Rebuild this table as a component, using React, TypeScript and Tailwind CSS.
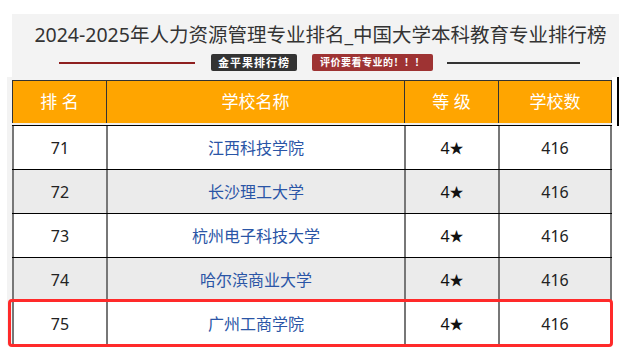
import React from "react";

const rows = [
  { rank: 71, name: "江西科技学院", count: 416 },
  { rank: 72, name: "长沙理工大学", count: 416 },
  { rank: 73, name: "杭州电子科技大学", count: 416 },
  { rank: 74, name: "哈尔滨商业大学", count: 416 },
  { rank: 75, name: "广州工商学院", count: 416 },
];

const cols = "grid grid-cols-[94px_298px_94px_114px]";

function Row({
  rank,
  name,
  count,
  shaded,
  marked,
}: {
  rank: number;
  name: string;
  count: number;
  shaded: boolean;
  marked: boolean;
}) {
  return (
    <div
      className={`${cols} relative h-[44px] border-t border-black text-[16px] ${
        shaded ? "bg-[#ebebeb]" : "bg-white"
      }`}
    >
      <div className="flex items-center justify-center border-l-2 border-[#777] text-[#222]">
        {rank}
      </div>
      <div className="flex items-center justify-center border-l-2 border-[#777] text-[#2a55a6]">
        {name}
      </div>
      <div className="flex items-center justify-center border-l-2 border-[#777] text-[#111]">
        4<span className="text-[14px]">★</span>
      </div>
      <div className="flex items-center justify-center border-x-2 border-[#777] text-[#222]">
        {count}
      </div>
      {marked ? (
        <div className="absolute -left-[4px] -right-[1px] -top-[3px] -bottom-[2px] rounded-[4px] border-[3px] border-[#ff2a2a]" />
      ) : null}
    </div>
  );
}

export default function App() {
  return (
    <div className="w-[619px] h-[364px] overflow-hidden bg-white font-['Noto_Sans','Noto_Sans_CJK_SC',sans-serif]">
      <div className="h-[14px]" />

      <div className="ml-[12px] h-[63px] bg-[#f3f3f3]">
        <h1 className="pt-[9px] pl-[10px] text-center text-[19.5px] leading-[24px] text-[#333]">
          2024-2025年人力资源管理专业排名_中国大学本科教育专业排行榜
        </h1>
        <div className="mt-[7px] flex items-center pl-[47px]">
          <div className="w-[136px] h-[2px] bg-[#8e1f1f]" />
          <div className="ml-[16px] w-[86px] h-[17px] rounded-[2px] bg-[#333] text-white text-[11px] font-bold leading-[17px] text-center tracking-[1px]">
            金平果排行榜
          </div>
          <div className="ml-[15px] w-[121px] h-[17px] rounded-[2px] bg-[#9e3333] text-white text-[10px] font-bold leading-[17px] text-center tracking-[0.5px]">
            评价要看专业的！！！
          </div>
          <div className="ml-[14px] w-[133px] h-[2px] bg-[#333]" />
        </div>
      </div>

      <div className="flex">
        <div className="ml-[7px] w-[605px] bg-[#f3f3f3] pl-[5px] pt-[3px]">
          <div className={`${cols} h-[43px] border-t border-[#333] bg-[#ffa500] text-white text-[17px]`}>
            <div className="flex items-center justify-center border-l border-[#333]">排 名</div>
            <div className="flex items-center justify-center border-l border-[#333]">学校名称</div>
            <div className="flex items-center justify-center border-l border-[#333]">等 级</div>
            <div className="flex items-center justify-center border-x border-[#333]">学校数</div>
          </div>
          <div className="h-[2px] bg-[#eee]" />
          {rows.map((r, i) => (
            <Row key={r.rank} {...r} shaded={i % 2 === 1} marked={i === rows.length - 1} />
          ))}
        </div>
        <div className="ml-[5px] w-[2px] h-[49px] bg-black" />
      </div>
    </div>
  );
}
